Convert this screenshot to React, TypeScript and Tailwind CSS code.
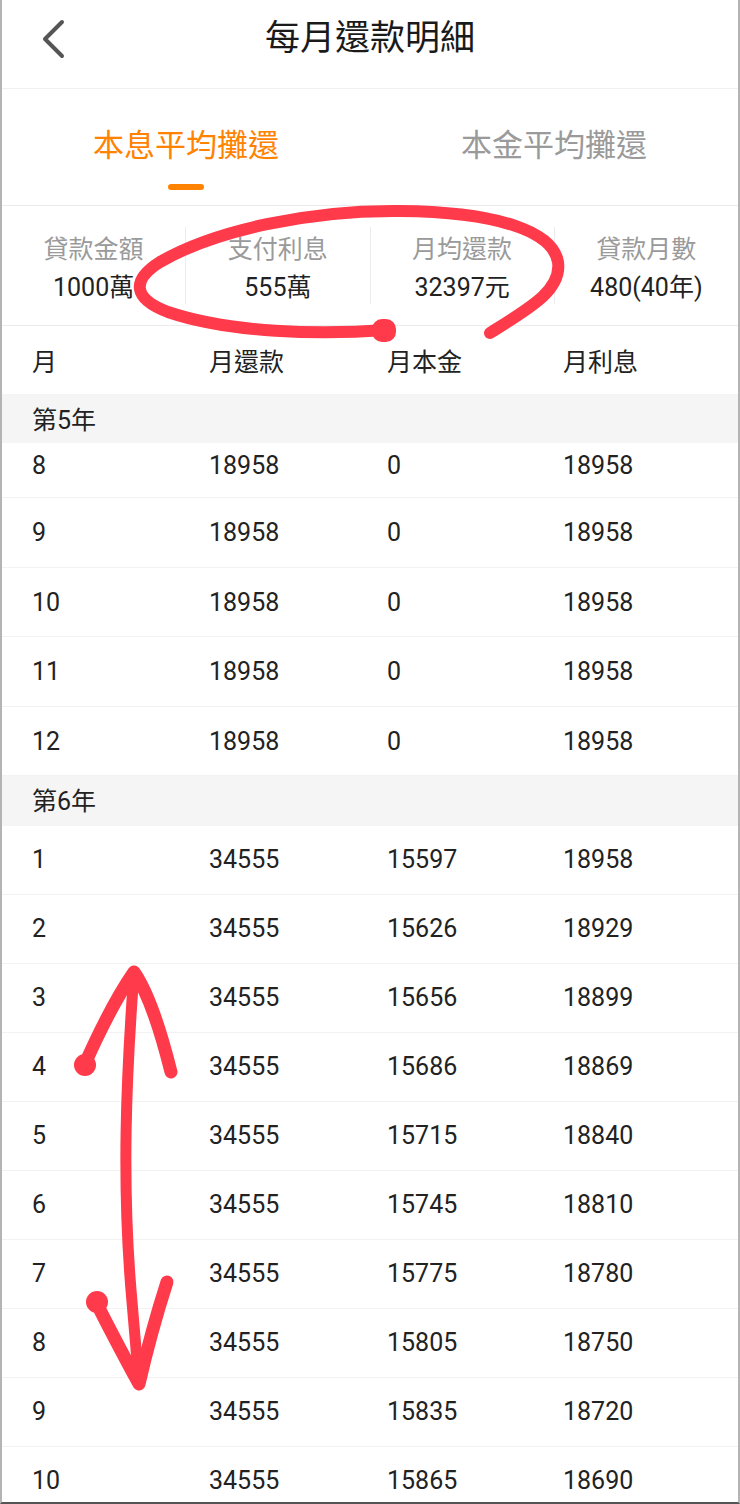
import React from "react";

const FONT = { fontFamily: 'Roboto, "Noto Sans CJK TC", "Noto Sans", sans-serif' };

type Row = [string, string, string, string];

const year5: Row[] = [
  ["9", "18958", "0", "18958"],
  ["10", "18958", "0", "18958"],
  ["11", "18958", "0", "18958"],
  ["12", "18958", "0", "18958"],
];

const year6: Row[] = [
  ["1", "34555", "15597", "18958"],
  ["2", "34555", "15626", "18929"],
  ["3", "34555", "15656", "18899"],
  ["4", "34555", "15686", "18869"],
  ["5", "34555", "15715", "18840"],
  ["6", "34555", "15745", "18810"],
  ["7", "34555", "15775", "18780"],
  ["8", "34555", "15805", "18750"],
  ["9", "34555", "15835", "18720"],
  ["10", "34555", "15865", "18690"],
];

function Cells({ r }: { r: Row }) {
  return (
    <>
      <div>{r[0]}</div>
      <div>{r[1]}</div>
      <div>{r[2]}</div>
      <div>{r[3]}</div>
    </>
  );
}

const gridCls =
  "grid grid-cols-[177px_178px_176px_1fr] pl-[30px] text-[25px] leading-[30px] text-[#222]";

export default function App() {
  return (
    <div
      className="relative w-[740px] h-[1504px] overflow-hidden bg-white border-l-2 border-r-2 border-b-2 border-l-[#b4b4b4] border-r-[#b4b4b4] border-b-[#555]"
      style={FONT}
    >
      {/* Header */}
      <div className="grid grid-cols-[1fr_auto_1fr] items-center h-[89px] pb-[10px] border-b border-[#f0f0f0]">
        <div className="pl-[38px] flex items-center">
          <svg width="28" height="40" viewBox="0 0 28 40">
            <polyline
              points="22,3 5,20 22,37"
              fill="none"
              stroke="#555"
              strokeWidth="4"
              strokeLinecap="round"
              strokeLinejoin="round"
            />
          </svg>
        </div>
        <div className="text-[35px] leading-[40px] text-[#1a1a1a]">每月還款明細</div>
        <div />
      </div>

      {/* Tabs */}
      <div className="flex h-[117px] border-b border-[#ececec]">
        <div className="flex-1 flex flex-col items-center pt-[38px]">
          <div className="text-[31px] leading-[38px] text-[#ff8200]">本息平均攤還</div>
          <div className="mt-[19px] w-[36px] h-[6px] rounded-full bg-[#ff8200]" />
        </div>
        <div className="flex-1 flex flex-col items-center pt-[38px]">
          <div className="text-[31px] leading-[38px] text-[#9a9a9a]">本金平均攤還</div>
        </div>
      </div>

      {/* Summary */}
      <div className="flex h-[120px] border-b border-[#ececec]">
        {[
          ["貸款金額", "1000萬"],
          ["支付利息", "555萬"],
          ["月均還款", "32397元"],
          ["貸款月數", "480(40年)"],
        ].map(([l, v], i) => (
          <div
            key={l}
            className={
              "flex-1 my-[21px] pt-[6px] flex flex-col items-center justify-center gap-[8px] " +
              (i > 0 ? "border-l border-[#ececec]" : "")
            }
          >
            <div className="text-[25px] leading-[30px] text-[#9a9a9a]">{l}</div>
            <div className="text-[25px] leading-[30px] text-[#222]">{v}</div>
          </div>
        ))}
      </div>

      {/* Table header */}
      <div className={gridCls + " h-[68px] items-center pt-[6px]"}>
        <div>月</div>
        <div>月還款</div>
        <div>月本金</div>
        <div>月利息</div>
      </div>

      {/* Year 5 */}
      <div className="h-[49px] flex items-center pt-[4px] pl-[30px] bg-[#f5f5f5] text-[25px] leading-[30px] text-[#222]">
        第5年
      </div>
      <div className={gridCls + " h-[55px] pt-[8px] border-b border-[#f2f2f2]"}>
        <Cells r={["8", "18958", "0", "18958"]} />
      </div>
      {year5.map((r) => (
        <div key={"y5" + r[0]} className={gridCls + " h-[69.5px] items-center pt-[2px] border-b border-[#f2f2f2]"}>
          <Cells r={r} />
        </div>
      ))}

      {/* Year 6 */}
      <div className="h-[50px] flex items-center pt-[2px] pl-[30px] bg-[#f5f5f5] text-[25px] leading-[30px] text-[#222]">
        第6年
      </div>
      {year6.map((r) => (
        <div key={"y6" + r[0]} className={gridCls + " h-[69px] items-center border-b border-[#f2f2f2]"}>
          <Cells r={r} />
        </div>
      ))}

      {/* Red annotations */}
      <svg
        className="absolute top-0 left-[-2px] pointer-events-none"
        width="740"
        height="1504"
        viewBox="0 0 740 1504"
      >
        <g fill="none" stroke="#fe3a4b" strokeLinecap="round" strokeLinejoin="round">
          <path
            d="M 490 333 C 530 308, 562 290, 558 262 C 553 232, 500 212, 400 211 C 310 210, 215 230, 160 262 C 130 281, 134 299, 168 312 C 230 333, 320 335, 386 330"
            strokeWidth="12"
          />
          <path d="M 134 972 C 126 1080, 122 1180, 131 1290 C 135 1340, 138 1370, 139 1384" strokeWidth="11" />
          <path d="M 84 1066 C 100 1030, 118 995, 134 972 C 150 995, 163 1040, 171 1072" strokeWidth="13" />
          <path d="M 96 1302 C 110 1330, 126 1360, 139 1384 C 148 1345, 158 1310, 167 1282" strokeWidth="13" />
        </g>
        <g fill="#fe3a4b">
          <rect x="372" y="319" width="24" height="23" rx="10" />
          <circle cx="85" cy="1065" r="11" />
          <circle cx="97" cy="1302" r="11" />
        </g>
      </svg>
    </div>
  );
}
